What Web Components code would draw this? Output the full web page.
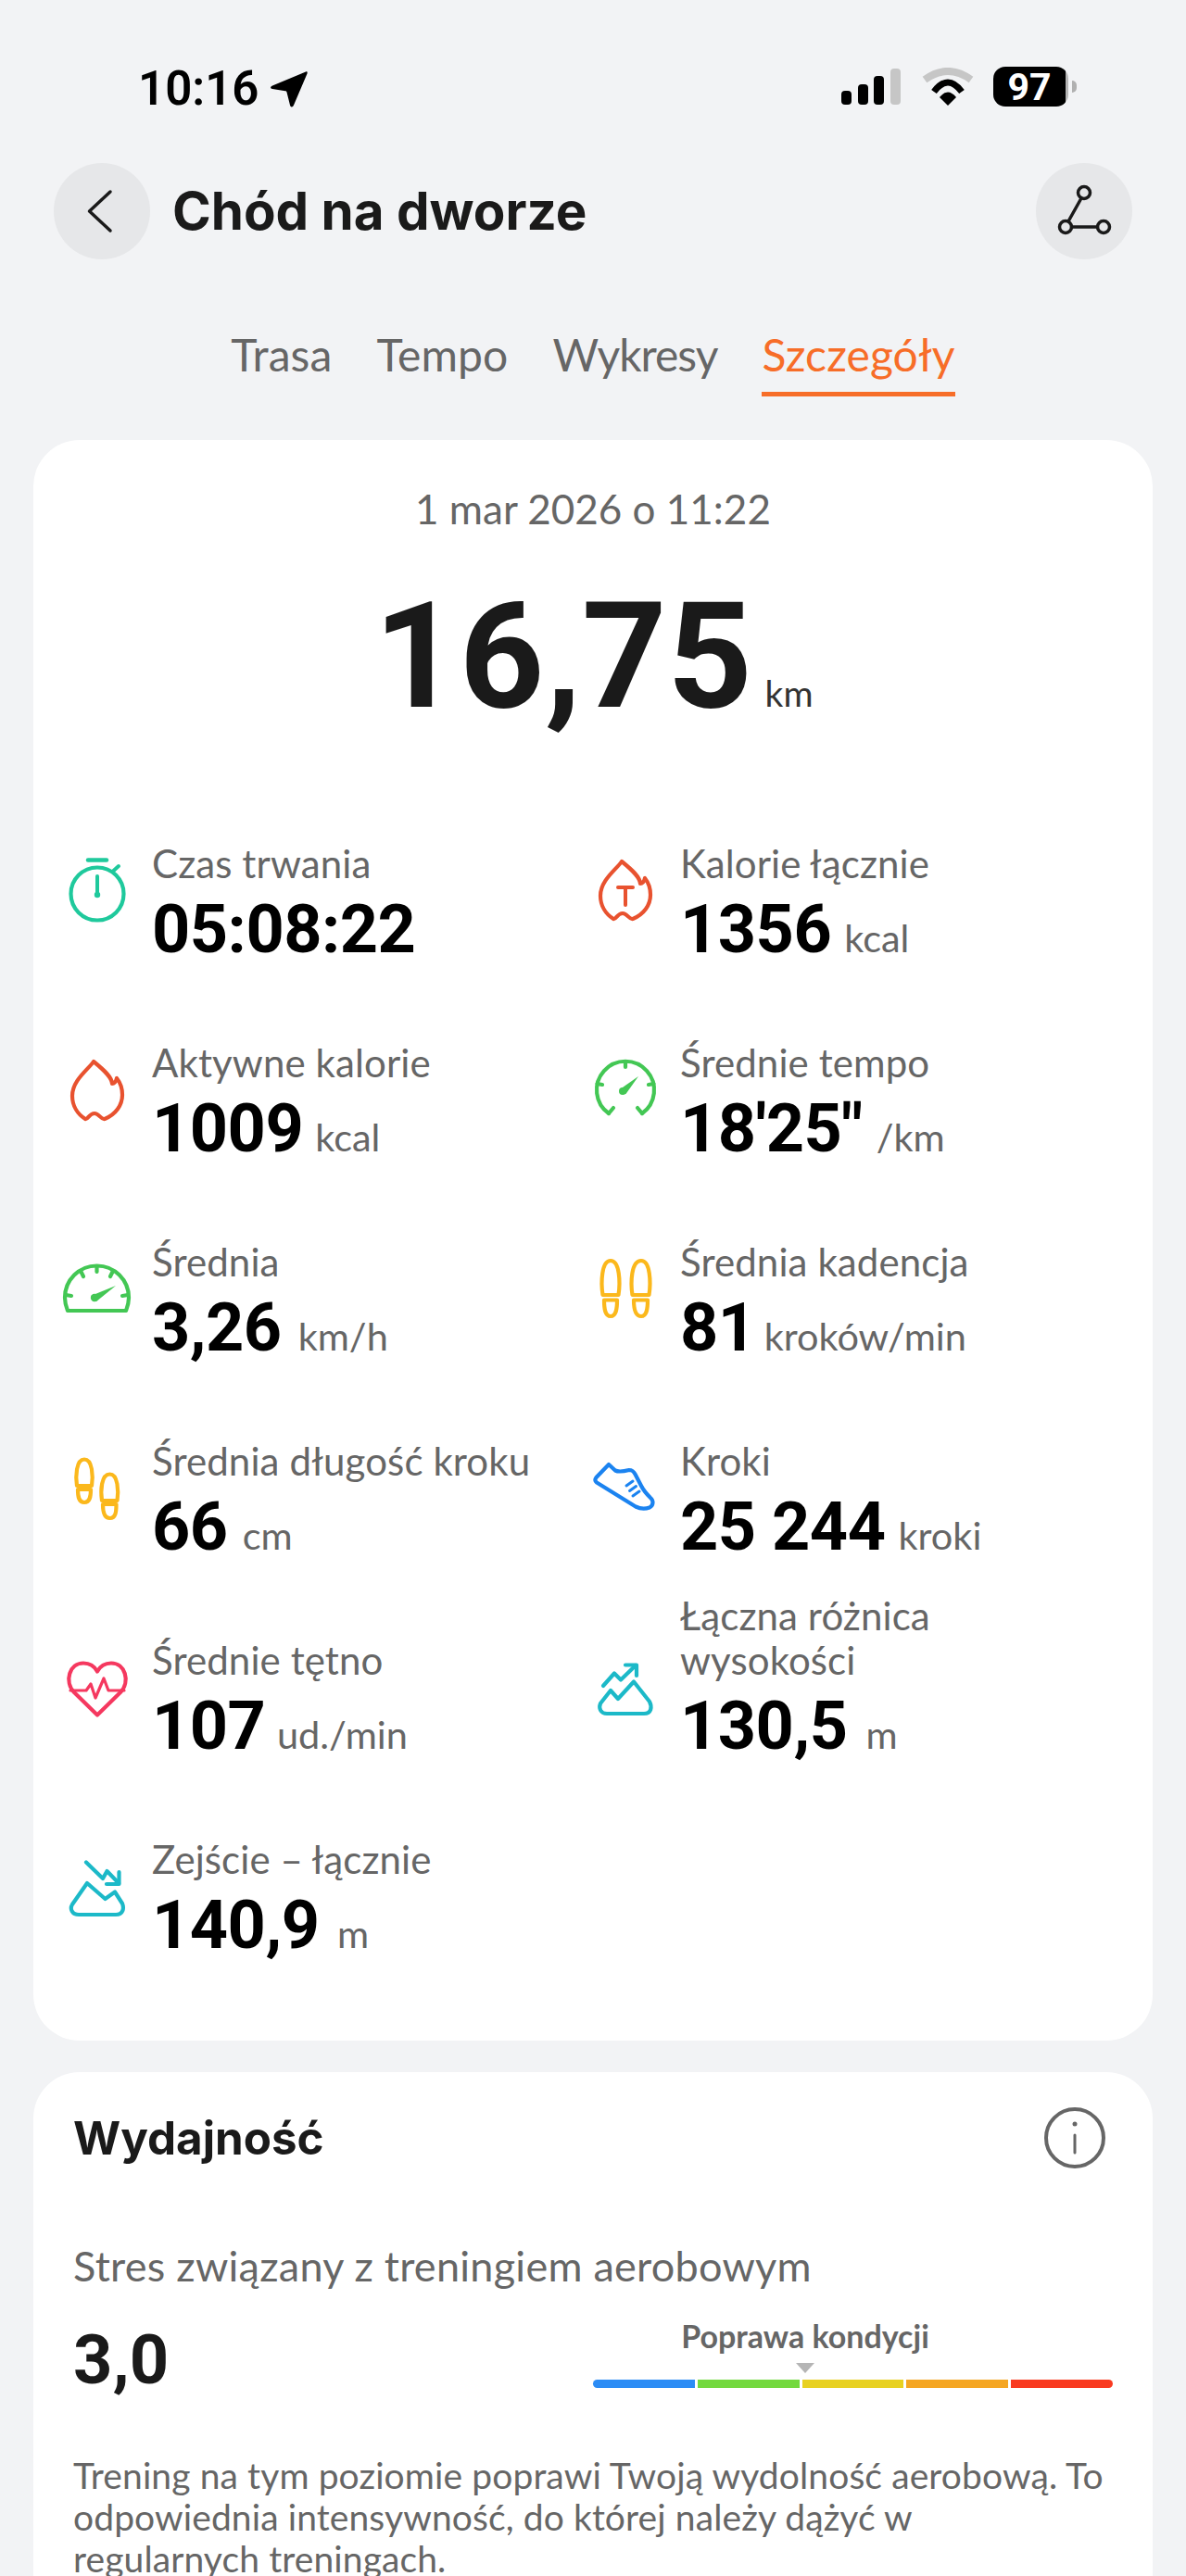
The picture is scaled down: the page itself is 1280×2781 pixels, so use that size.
<!doctype html>
<html lang="pl"><head><meta charset="utf-8"><title>Chód na dworze</title>
<style>
html,body{margin:0;padding:0;height:2781px;overflow:hidden;background:#f2f3f5;font-family:"Lato",sans-serif}
</style></head>
<body>
<status-bar time="10:16" battery="97"></status-bar>
<nav-header>Chód na dworze</nav-header>
<tab-bar>
  <tab-item>Trasa</tab-item><tab-item>Tempo</tab-item><tab-item style="letter-spacing:-1px">Wykresy</tab-item><tab-item active>Szczegóły</tab-item>
</tab-bar>
<summary-card date="1 mar 2026 o 11:22" distance="16,75" unit="km">
  <stat-item icon="timer"><span slot="label">Czas trwania</span><span slot="value">05:08:22</span></stat-item>
  <stat-item icon="flameT" gap="14"><span slot="label">Kalorie łącznie</span><span slot="value">1356</span><span slot="unit">kcal</span></stat-item>
  <stat-item icon="flame" gap="13"><span slot="label">Aktywne kalorie</span><span slot="value">1009</span><span slot="unit">kcal</span></stat-item>
  <stat-item icon="gaugeOpen" gap="15"><span slot="label">Średnie tempo</span><span slot="value">18'25"</span><span slot="unit">/km</span></stat-item>
  <stat-item icon="gauge" gap="18"><span slot="label">Średnia</span><span slot="value">3,26</span><span slot="unit">km/h</span></stat-item>
  <stat-item icon="feet" gap="9"><span slot="label">Średnia kadencja</span><span slot="value">81</span><span slot="unit">kroków/min</span></stat-item>
  <stat-item icon="stride" gap="16"><span slot="label">Średnia długość kroku</span><span slot="value">66</span><span slot="unit">cm</span></stat-item>
  <stat-item icon="shoe" gap="14"><span slot="label">Kroki</span><span slot="value">25 244</span><span slot="unit">kroki</span></stat-item>
  <stat-item icon="heart" gap="12.500"><span slot="label">Średnie tętno</span><span slot="value">107</span><span slot="unit">ud./min</span></stat-item>
  <stat-item icon="ascent" gap="20"><span slot="label">Łączna różnica<br>wysokości</span><span slot="value">130,5</span><span slot="unit">m</span></stat-item>
  <stat-item icon="descent" gap="19.500"><span slot="label">Zejście – łącznie</span><span slot="value">140,9</span><span slot="unit">m</span></stat-item>
</summary-card>
<performance-card heading="Wydajność" metric="Stres związany z treningiem aerobowym" score="3,0" level="Poprawa kondycji">Trening na tym poziomie poprawi Twoją wydolność aerobową. To odpowiednia intensywność, do której należy dążyć w<br>regularnych treningach.</performance-card>

<script>
const ICONS={
timer:{c:'#1fc99c',d:`<path d="M30 3.5H50" stroke-width="4.5"/><circle cx="40" cy="40" r="28.5"/><path d="M57 15.5L63 10" stroke-width="4"/><path d="M40 21V41" stroke-width="4"/><circle cx="40" cy="41" r="3.2" fill="currentColor" stroke="none"/>`},
flameT:{c:'#e8522f',d:`<path d="M36 5C31 13 13 25 13 42C13 53 19 62 27 67C30 68 31 61 37 61C42 61 44 68 48 67C60 62 67 52 67 41C67 35 65 28 61 23C60 27 58 29 56 29C56 22 47 14 36 5Z"/><path d="M32 33H48M40 33V52" stroke-width="4"/>`},
flame:{c:'#e8522f',d:`<path d="M36 6C31 14 13 26 13 43C13 54 19 63 27 68C30 69 31 62 37 62C42 62 44 69 48 68C60 63 67 53 67 42C67 36 65 29 61 24C60 28 58 30 56 30C56 23 47 15 36 6Z"/>`},
gaugeOpen:{c:'#43c754',d:`<path d="M22 62A31 31 0 1 1 58 62"/><path d="M22 62L27 56M58 62L53 56M40 6V12M9.5 30L15 31M70.5 30L65 31"/><path d="M34 36L54 22L40.500 41Z" fill="currentColor" stroke="none"/><circle cx="37" cy="38" r="4" fill="currentColor" stroke="none"/>`},
gauge:{c:'#43c754',d:`<path d="M8 60H71C73 55 74 51 74 46A34.500 34.500 0 0 0 5 46C5 51 6 55 8 60Z"/><path d="M39.500 12V18M22 17L25 23M57 17L54 23M6 43L12 44M73 43L67 44"/><path d="M33 44L60 33L39 50Z" fill="currentColor" stroke="none"/><circle cx="37" cy="46" r="4.200" fill="currentColor" stroke="none"/>`},
feet:{c:'#fbb81c',d:`<path d="M15.500 43C13.500 30 14 6 24 6C34 6 34.500 30 32.500 43Z"/><path d="M17 48.500H31C31 58 30 66 24 66C18 66 17 58 17 48.500Z"/><path d="M47.500 43C45.500 30 46 6 57 6C67 6 67.500 30 65.500 43Z"/><path d="M49 48.500H64C64 58 63 66 57 66C51 66 49 58 49 48.500Z"/>`},
stride:{c:'#fbb81c',d:`<path d="M18 34C16.500 24 17 5.500 26 5.500C35 5.500 35.500 24 34 34Z"/><path d="M19 38H33C33 46 32 52 26 52C20 52 19 46 19 38Z"/><path d="M45 50C43.500 40 44 21.500 53.500 21.500C62.500 21.500 63 40 61.500 50Z"/><path d="M46 54H60.500C60.500 62 60 69 53.500 69C47 69 46 62 46 54Z"/>`},
shoe:{c:'#1b83f0',d:`<path d="M22 11L8.500 25C7 27 7 29 9 30.500L51 56.500C56 59 62 59 66 57.500C70.500 55 70.500 50 67 47C63 43 60 40 57 34L50.500 21.500C49 18.500 46 17 44 17C38 18.500 33 19.500 29 17.500Z"/><path d="M41 34L48 29M44.500 39.500L51.500 34.500M48 45L55 40" stroke-width="3"/>`},
heart:{c:'#f5385f',d:`<path d="M40 66.500L15 42C4 30 10 10.500 25 10.500C32 10.500 37 14 40 19.500C43 14 48 10.500 55 10.500C70 10.500 76 30 65 42Z"/><path d="M11 40H28L33 33L38 48L47 27L52 40H69" stroke-width="3.200"/>`},
ascent:{c:'#1cb9c8',d:`<path d="M16 35L28 21.500L35 28.500L51 13"/><path d="M40 12.500H52V24"/><path d="M13 54L24 40L32 49L49 30.500L66 52C69 58 68 65 60 65H20C13 65 11 59 13 54Z"/>`},
descent:{c:'#1cb9c8',d:`<path d="M28 10.500L46 28L50.500 20L63 33"/><path d="M63.500 21V34H50"/><path d="M13 56L29 33L48.500 50L59 42.500L67 55C69 60 68 67 60 67H20C13 67 10 61 13 56Z"/>`}
};

function el(html){const t=document.createElement('template');t.innerHTML=html;return t.content.cloneNode(true)}

class StatusBar extends HTMLElement{
  connectedCallback(){
    const s=this.attachShadow({mode:'open'});
    s.append(el(`<style>
      :host{display:flex;justify-content:space-between;align-items:flex-start;height:176px;box-sizing:border-box;padding:66px 118px 0 149px;color:#000}
      .left{display:flex;align-items:center;gap:13px}
      .time{font:600 51px/60px "Roboto",sans-serif;}
      svg{display:block}
      .arrow{margin-top:-1px}
      .right{display:flex;align-items:flex-start;margin-top:6px}
      .sig{margin:2px 23px 0 0}.wifi{margin:1px 21px 0 0}
      .bat{width:81px;height:43px;border-radius:13px;background:linear-gradient(90deg,#000 96%,#b5b5b5 96%);color:#fff;font:700 41px/44px "Roboto",sans-serif;text-align:center;padding-right:3px;box-sizing:border-box}
      .nub{width:5px;height:13px;margin:15px 0 0 4px;background:#b0b0b0;border-radius:0 6px 6px 0}
    </style>
    <div class="left"><span class="time">${this.getAttribute('time')}</span>
      <svg class="arrow" width="40" height="40" viewBox="0 0 40 40"><path d="M38 1.500C39.500 1 40 2 39.500 3.500L25 37.500C24 40 21.500 40 21 37.500L17.500 23.500C17.200 22.500 16.800 22.300 16 22.200L2 20C-.5 19.500 -.5 17.500 2 16.500Z" fill="#000"/></svg></div>
    <div class="right">
      <svg class="sig" width="64" height="39" viewBox="0 0 64 39"><rect x="0" y="24" width="11" height="15" rx="4"/><rect x="18" y="17" width="11" height="22" rx="4"/><rect x="35" y="8" width="11" height="31" rx="4"/><rect x="53" y="0" width="11" height="39" rx="4" fill="#c6c6c6"/></svg>
      <svg class="wifi" width="56" height="41" viewBox="0 0 56 41" fill="none"><path d="M3 13Q28 -5 53 13" stroke="#c6c6c6" stroke-width="8"/><path d="M13 26Q28 6 43 26" stroke="#000" stroke-width="7"/><path d="M19 32Q28 21 37 32L28 41Z" fill="#000"/></svg>
      <div class="bat">${this.getAttribute('battery')}</div><div class="nub"></div>
    </div>`));
  }
}
class NavHeader extends HTMLElement{
  connectedCallback(){
    const s=this.attachShadow({mode:'open'});
    s.append(el(`<style>
      :host{display:flex;align-items:center;height:104px;padding:0 58px;color:#1a1a1a}
      .btn{width:104px;height:104px;border-radius:50%;background:#e6e7e9;flex:none}
      svg{display:block;fill:none;stroke:#1a1a1a;stroke-linecap:round;stroke-linejoin:round}
      .t{flex:1;margin-left:24px;font:700 56.500px/104px "Inter",sans-serif}
    </style>
    <div class="btn"><svg width="104" height="104"><path d="M61 31L38.500 52L61 73" stroke-width="3.500"/></svg></div>
    <div class="t"><slot></slot></div>
    <div class="btn"><svg width="104" height="104" stroke-width="3.500"><circle cx="52" cy="32" r="6.500"/><circle cx="32" cy="69" r="6.500"/><circle cx="73" cy="69" r="6.500"/><path d="M49 38L35 63M38.500 69H66.500"/></svg></div>`));
  }
}
class TabBar extends HTMLElement{
  constructor(){super();this.attachShadow({mode:'open'}).append(el(`<style>
    :host{display:flex;justify-content:center;gap:48px;height:195px;padding-top:74px;box-sizing:border-box;align-items:flex-start}
  </style><slot></slot>`))}
}
class TabItem extends HTMLElement{
  constructor(){super();this.attachShadow({mode:'open'}).append(el(`<style>
    :host{display:block;font:400 48px/58px "Lato",sans-serif;letter-spacing:.1px;color:#666;padding-bottom:11px;border-bottom:5px solid transparent}
    :host([active]){color:#f76d28;border-bottom-color:#f76d28}
  </style><slot></slot>`))}
}
class SummaryCard extends HTMLElement{
  connectedCallback(){
    const s=this.attachShadow({mode:'open'});
    s.append(el(`<style>
      :host{display:block;margin:0 36px;height:1728px;box-sizing:border-box;padding-top:48px;background:#fff;border-radius:50px}
      .date{font:400 44px/52px "Lato",sans-serif;color:#666;text-align:center}
      .big{display:flex;justify-content:center;align-items:baseline;gap:13px;margin:49px 0 0 1px}
      .n{font:700 160px/170px "Roboto",sans-serif;letter-spacing:.5px;color:#1a1a1a}
      .u{font:400 39px/44px "Lato",sans-serif;color:#333}
      .grid{display:grid;grid-template-columns:570px 570px;grid-auto-rows:215px;margin:37px 0 0 29px}
    </style>
    <div class="date">${this.getAttribute('date')}</div>
    <div class="big"><span class="n">${this.getAttribute('distance')}</span><span class="u">${this.getAttribute('unit')}</span></div>
    <div class="grid"><slot></slot></div>`));
  }
}
class StatItem extends HTMLElement{
  connectedCallback(){
    const i=ICONS[this.getAttribute('icon')],g=this.getAttribute('gap')||0;
    const s=this.attachShadow({mode:'open'});
    s.append(el(`<style>
      :host{display:flex;align-items:flex-end;gap:19px;min-width:0}
      svg{display:block;flex:none;margin-bottom:41px;fill:none;stroke:currentColor;stroke-width:4.200;stroke-linecap:round;stroke-linejoin:round;color:${i.c}}
      .lab{font:400 42px/48px "Lato",sans-serif;letter-spacing:.1px;color:#666;margin-bottom:6.500px}
      .row{display:flex;align-items:baseline;gap:${g}px}
      ::slotted([slot=value]){font:700 72px/84px "Roboto",sans-serif;letter-spacing:-.5px;color:#000}
      ::slotted([slot=unit]){font:400 41.500px/48px "Lato",sans-serif;color:#666}
    </style>
    <svg width="80" height="80" viewBox="0 0 80 80">${i.d}</svg>
    <div><div class="lab"><slot name="label"></slot></div><div class="row"><slot name="value"></slot><slot name="unit"></slot></div></div>`));
  }
}
class LoadScale extends HTMLElement{
  connectedCallback(){
    const s=this.attachShadow({mode:'open'});
    s.append(el(`<style>
      :host{display:block;width:561px;flex:none;margin-right:-8px}
      .mark{width:458px;text-align:center}
      .l{font:700 34px/40px "Lato",sans-serif;color:#666}
      svg{display:block;margin:9px auto 0}
      .bars{display:flex;gap:3px;margin-top:7px}
      .bars i{flex:1;height:9px;display:block}
      .bars i:first-child{border-radius:5px 0 0 5px}.bars i:last-child{border-radius:0 5px 5px 0}
    </style>
    <div class="mark"><div class="l"><slot></slot></div><svg width="20" height="11"><path d="M0 0H20L10 11Z" fill="#b5b5b5"/></svg></div>
    <div class="bars"><i style="background:#2b8cf5"></i><i style="background:#73d93f"></i><i style="background:#e8d122"></i><i style="background:#f5a623"></i><i style="background:#f93a20"></i></div>`));
  }
}
class PerformanceCard extends HTMLElement{
  connectedCallback(){
    const a=n=>this.getAttribute(n);
    const s=this.attachShadow({mode:'open'});
    s.append(el(`<style>
      :host{display:block;margin:34px 36px 0;box-sizing:border-box;padding:41px 51px 60px 43px;background:#fff;border-radius:50px 50px 0 0}
      .h{display:flex;justify-content:space-between;align-items:center;height:60px}
      .h b{font:700 49.300px/60px "Inter",sans-serif;color:#1a1a1a}
      .m{font:400 45px/54px "Lato",sans-serif;letter-spacing:.26px;color:#666;margin-top:80.500px}
      .r{display:flex;justify-content:space-between;align-items:flex-start;margin-top:29.500px}
      .v{font:700 74px/84px "Roboto",sans-serif;color:#1a1a1a;margin-top:4px}
      p{margin:60px 0 0;font:400 39px/45px "Lato",sans-serif;letter-spacing:.1px;color:#666}
    </style>
    <div class="h"><b>${a('heading')}</b><svg width="66" height="66" viewBox="0 0 66 66" fill="none" stroke="#666" stroke-linecap="round" style="display:block"><circle cx="33" cy="33" r="31" stroke-width="4"/><path d="M33 30V49" stroke-width="3"/><circle cx="33" cy="18" r="2.500" fill="#666" stroke="none"/></svg></div>
    <div class="m">${a('metric')}</div>
    <div class="r"><div class="v">${a('score')}</div><load-scale>${a('level')}</load-scale></div>
    <p><slot></slot></p>`));
  }
}
customElements.define('status-bar',StatusBar);
customElements.define('nav-header',NavHeader);
customElements.define('tab-bar',TabBar);
customElements.define('tab-item',TabItem);
customElements.define('stat-item',StatItem);
customElements.define('summary-card',SummaryCard);
customElements.define('load-scale',LoadScale);
customElements.define('performance-card',PerformanceCard);
</script>
</body></html>
